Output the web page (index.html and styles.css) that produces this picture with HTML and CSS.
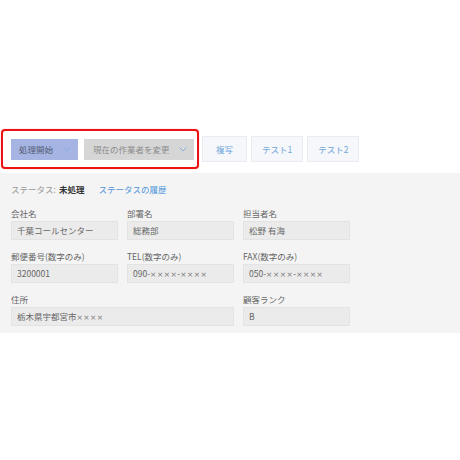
FILE: index.html
```html
<!DOCTYPE html>
<html lang="ja">
<head>
<meta charset="utf-8">
<title>詳細</title>
<link rel="stylesheet" href="styles.css">
</head>
<body>
<div class="page">
  <div class="toolbar">
    <div class="highlight">
      <button class="btn btn-primary">処理開始<svg class="chev" viewBox="0 0 8 5" width="8" height="5"><polyline points="0.5,0.5 4,4 7.5,0.5"/></svg></button>
      <button class="btn btn-grey">現在の作業者を変更<svg class="chev" viewBox="0 0 8 5" width="8" height="5"><polyline points="0.5,0.5 4,4 7.5,0.5"/></svg></button>
    </div>
    <button class="btn-light btn-copy">複写</button>
    <button class="btn-light">テスト1</button>
    <button class="btn-light">テスト2</button>
  </div>
  <div class="panel">
    <div class="status">
      <span class="status-label">ステータス:</span>
      <span class="status-value">未処理</span>
      <a class="status-link">ステータスの履歴</a>
    </div>
    <div class="grid">
      <div class="field"><div class="label">会社名</div><div class="input">千葉コールセンター</div></div>
      <div class="field"><div class="label">部署名</div><div class="input">総務部</div></div>
      <div class="field"><div class="label">担当者名</div><div class="input">松野 有海</div></div>
      <div class="field"><div class="label">郵便番号(数字のみ)</div><div class="input">3200001</div></div>
      <div class="field"><div class="label">TEL(数字のみ)</div><div class="input">090-<span class="x">××××</span>-<span class="x">××××</span></div></div>
      <div class="field"><div class="label">FAX(数字のみ)</div><div class="input">050-<span class="x">××××</span>-<span class="x">××××</span></div></div>
      <div class="field span2"><div class="label">住所</div><div class="input">栃木県宇都宮市<span class="x">××××</span></div></div>
      <div class="field"><div class="label">顧客ランク</div><div class="input">B</div></div>
    </div>
  </div>
</div>
</body>
</html>
```
FILE: styles.css
```css
* { box-sizing: border-box; }
html, body { margin: 0; padding: 0; background: #ffffff; }
body {
  font-family: "Noto Sans CJK JP", "Noto Sans", sans-serif;
  font-size: 8.5px;
  color: #666;
  width: 460px;
  height: 460px;
  overflow: hidden;
}
.page { padding-top: 129px; }
.toolbar {
  display: flex;
  align-items: center;
  padding-left: 1px;
  height: 40px;
}
.highlight {
  display: flex;
  align-items: center;
  gap: 6px;
  border: 2px solid #ee1111;
  border-radius: 4px;
  height: 40px;
  padding: 0 3px 0 8px;
  box-shadow: 0 0 1px rgba(200,0,0,0.5);
}
.btn {
  display: flex;
  align-items: center;
  height: 21px;
  border: none;
  font-family: inherit;
  font-size: 8.5px;
  line-height: 12px;
  padding: 0;
  margin: 0;
}
.btn-primary {
  width: 67px;
  background: #a5b4e2;
  color: #535b73;
  padding-left: 8px;
}
.btn-primary .chev { margin-left: 10px; }
.btn-grey {
  width: 110px;
  background: #d6d6d6;
  color: #8a8a8a;
  padding-left: 9px;
}
.btn-grey .chev { margin-left: 9px; }
.chev { fill: none; stroke: #86aee0; stroke-width: 1; }
.btn-light {
  height: 26px;
  background: #f5f7fa;
  border: 1px solid #e9edf2;
  color: #6fa6dc;
  font-family: inherit;
  font-size: 8.5px;
  padding: 0 10px;
  margin: 0 4px 0 0;
}
.btn-copy { margin-left: 3px; width: 45px; padding: 0; }
.panel {
  margin-top: 4px;
  background: #f4f4f4;
  padding: 10px 11px 7px 11px;
}
.status {
  line-height: 12px;
  display: flex;
  align-items: center;
}
.status-label { color: #999; }
.status-value { color: #333; font-weight: bold; margin-left: 3px; }
.status-link { color: #4d94db; margin-left: 14px; }
.grid {
  margin-top: 12px;
  display: grid;
  grid-template-columns: 107px 107px 107px;
  column-gap: 9px;
  row-gap: 10px;
}
.span2 { grid-column: span 2; }
.label {
  line-height: 12px;
  color: #666;
  margin-bottom: 2px;
}
.input {
  height: 19px;
  line-height: 17px;
  background: #ebebeb;
  border: 1px solid #e3e3e3;
  padding-left: 5px;
  color: #666;
}
.x { font-family: "DejaVu Sans", sans-serif; font-size: 7.5px; letter-spacing: 0.5px; color: #777; }
```
